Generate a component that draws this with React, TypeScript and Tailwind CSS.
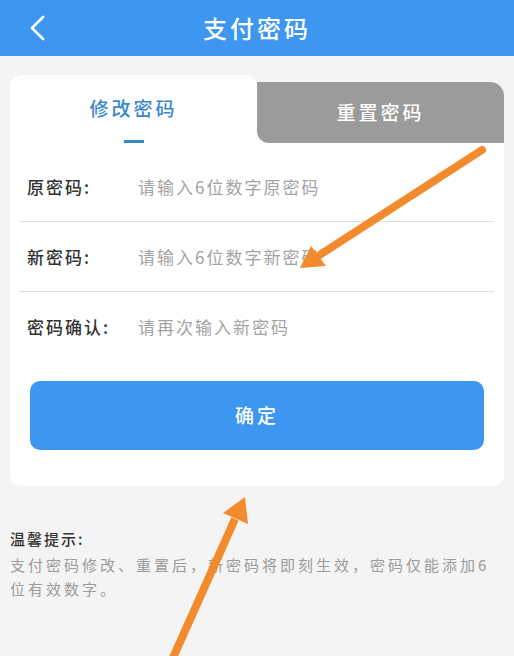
import React from 'react';

const font = { fontFamily: '"Noto Sans CJK SC", "Noto Sans", sans-serif' };

const rows = [
  { label: '原密码:', hint: '请输入6位数字原密码' },
  { label: '新密码:', hint: '请输入6位数字新密码' },
  { label: '密码确认:', hint: '请再次输入新密码' },
];

export default function App() {
  return (
    <div className="relative min-h-screen bg-[#f4f4f4]" style={font}>
      {/* Header */}
      <div className="relative flex h-[56px] items-center justify-center bg-[#3d97f0]">
        <svg className="absolute left-[28px] top-[15px]" width="20" height="26" viewBox="0 0 20 26" fill="none">
          <path d="M15 2 L4 13 L15 24" stroke="white" strokeWidth="2.6" strokeLinecap="round" strokeLinejoin="round" />
        </svg>
        <h1 className="text-[24px] font-medium tracking-[3px] text-white">支付密码</h1>
      </div>

      {/* Card */}
      <div className="mx-[10px] mt-[19px]">
        <div className="flex items-end">
          <div className="flex h-[68px] flex-1 flex-col items-center rounded-t-[12px] bg-white pt-[19px]">
            <span className="text-[19px] font-medium leading-[28px] tracking-[3px] text-[#3a88cc]">修改密码</span>
            <span className="mt-[18px] h-[3px] w-[20px] bg-[#3a88cc]" />
          </div>
          <div className="h-[61px] flex-1 rounded-tr-[14px] bg-white">
            <div className="flex h-full items-center justify-center rounded-tr-[14px] rounded-bl-[12px] bg-[#9b9b9b]">
              <span className="text-[19px] font-medium tracking-[3px] text-white">重置密码</span>
            </div>
          </div>
        </div>

        <div className="rounded-b-[10px] bg-white px-[10px] pb-[36px] pt-[9px]">
          {rows.map((r, i) => (
            <div
              key={r.label}
              className={`flex h-[70px] items-center px-[7px] ${i < rows.length - 1 ? 'border-b border-[#dedede]' : ''}`}
            >
              <span className="w-[111px] text-[17px] font-medium tracking-[2px] text-[#333]">{r.label}</span>
              <span className="text-[17px] tracking-[2px] text-[#a3a3a3]">{r.hint}</span>
            </div>
          ))}
          <button className="mx-[10px] mt-[19px] flex h-[69px] w-[calc(100%-20px)] items-center justify-center rounded-[10px] bg-[#3d97f0] text-[19px] font-medium tracking-[3px] text-white">
            确定
          </button>
        </div>
      </div>

      {/* Tips */}
      <div className="px-[10px] pt-[41px]">
        <p className="text-[15px] font-medium leading-[24px] tracking-[2px] text-[#333]">温馨提示:</p>
        <p className="mt-[2px] text-[15px] leading-[24px] tracking-[3px] text-[#9a9a9a]">
          支付密码修改、重置后，新密码将即刻生效，密码仅能添加6位有效数字。
        </p>
      </div>

      {/* Annotation arrows */}
      <svg className="pointer-events-none absolute left-0 top-0" width="514" height="656" viewBox="0 0 514 656">
        <line x1="482" y1="150" x2="318" y2="256" stroke="#f28a2e" strokeWidth="8" strokeLinecap="round" />
        <polygon points="300,268 326,266 311,246" fill="#f28a2e" />
        <line x1="172" y1="660" x2="235" y2="519" stroke="#f28a2e" strokeWidth="8" />
        <polygon points="245,497 248,524 223,513" fill="#f28a2e" />
      </svg>
    </div>
  );
}
